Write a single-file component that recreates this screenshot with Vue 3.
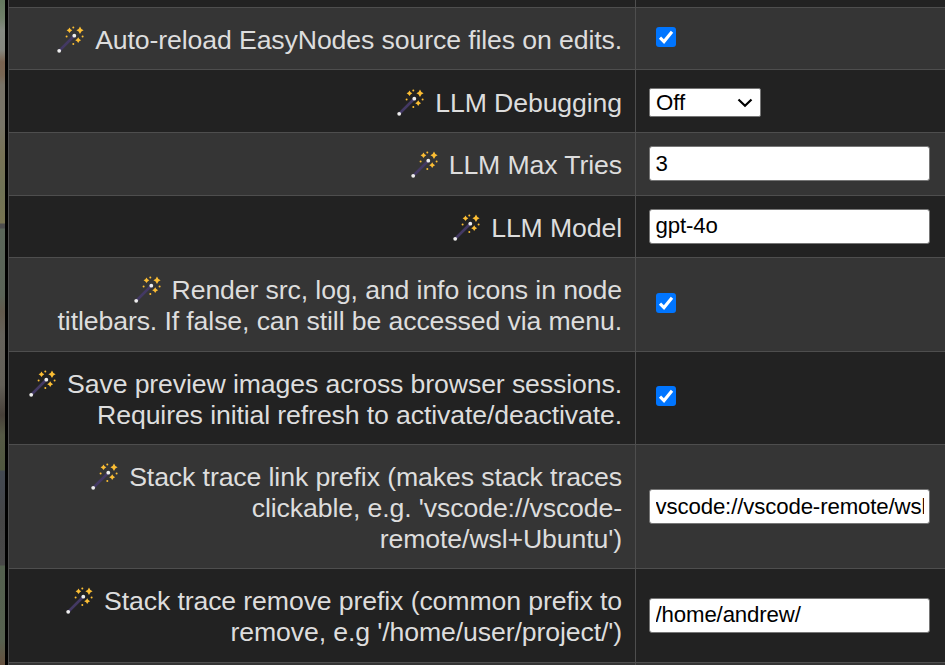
<script setup>
const rows = [
  { h: 62, type: 'check', drop: true, lines: ['Auto-reload EasyNodes source files on edits.'] },
  { h: 63, type: 'select', drop: true, value: 'Off', lines: ['LLM Debugging'] },
  { h: 63, type: 'text', lift: true, low: true, value: '3', lines: ['LLM Max Tries'] },
  { h: 62, type: 'text', drop: true, value: 'gpt-4o', lines: ['LLM Model'] },
  { h: 94, type: 'check', lines: ['Render src, log, and info icons in node', 'titlebars. If false, can still be accessed via menu.'] },
  { h: 93, type: 'check', drop: true, lift: true, lines: ['Save preview images across browser sessions.', 'Requires initial refresh to activate/deactivate.'] },
  { h: 124, type: 'text', drop: true, low: true, value: 'vscode://vscode-remote/wsl+Ubuntu', lines: ['Stack trace link prefix (makes stack traces', "clickable, e.g. 'vscode://vscode-", "remote/wsl+Ubuntu')"] },
  { h: 94, type: 'text', value: '/home/andrew/', lines: ['Stack trace remove prefix (common prefix to', "remove, e.g '/home/user/project/')"] },
]
</script>

<template>
  <div class="page">
    <div class="backdrop"></div>
    <div class="table">
      <div class="row edge"><div class="label"></div><div class="field"></div></div>
      <div v-for="(row, i) in rows" :key="i" class="row" :class="{ odd: i % 2 === 0 }" :style="{ height: row.h + 'px' }">
        <div class="label" :class="{ drop: row.drop }">
          <div v-for="(line, j) in row.lines" :key="j" class="line">
            <svg v-if="j === 0" class="wand" viewBox="0 0 27 27" aria-hidden="true">
              <path d="M2 25 17 10" stroke="#433963" stroke-width="2.6" />
              <circle cx="2.2" cy="24.8" r="1.9" fill="#eee" />
              <circle cx="17.3" cy="9.7" r="1.9" fill="#eee" />
              <g fill="#fcbe34">
                <path d="M23 .5 24.4 2.9 26.6 4.2 24.4 5.6 23 8 21.6 5.6 19.4 4.2 21.6 2.9Z" />
                <path d="M12.5 1.5 13.6 3.2 15.3 4.3 13.6 5.4 12.5 7 11.4 5.4 9.6 4.3 11.4 3.2Z" />
                <path d="M21.2 11.3 22.3 13.1 24.1 14.2 22.3 15.3 21.2 17.1 20.1 15.3 18.2 14.2 20.1 13.1Z" />
                <circle cx="16.3" cy="1.5" r="1" /><circle cx="9.6" cy="10.4" r="1" />
                <circle cx="25.6" cy="10.4" r="1" /><circle cx="16.3" cy="18" r="1" />
              </g>
            </svg>
            <span>{{ line }}</span>
          </div>
        </div>
        <div class="field" :class="{ lift: row.lift }">
          <input v-if="row.type === 'text'" class="input" :class="{ low: row.low }" type="text" :value="row.value" />
          <div v-else-if="row.type === 'select'" class="select">
            <span>{{ row.value }}</span>
            <svg viewBox="0 0 16 10" aria-hidden="true"><path d="M1.5 1.5 8 7.8 14.5 1.5" /></svg>
          </div>
          <div v-else class="check" role="checkbox" aria-checked="true">
            <svg viewBox="0 0 20 20" aria-hidden="true"><path d="M4 10.6 8 14.6 16 4.8" /></svg>
          </div>
        </div>
      </div>
      <div class="row odd last"><div class="label"></div><div class="field"></div></div>
    </div>
  </div>
</template>

<style>
body { background: #000; overflow: hidden; }
</style>

<style scoped>
.page { display: flex; width: 945px; height: 665px; overflow: hidden; background: #000; font-family: "Liberation Sans", Arial, sans-serif; }
.backdrop {
  width: 5px; margin-right: 3px; flex: none;
  background: linear-gradient(#63785d 0, #708069 18px, #858a82 30px, #85877f 50px, #7a6350 62px, #796653 75px, #777267 85px, #777467 125px, #777255 155px, #6f7255 190px, #777350 223px, #4d4d4d 224px, #4d4d4d 228px, #5a6659 229px, #5a6357 295px, #635a4d 312px, #65625b 335px, #625f57 385px, #474039 415px, #555945 435px, #50583f 470px, #434951 471px, #43474e 490px, #454545 520px, #484848 565px, #53604e 566px, #56614f 640px, #66503e 665px);
}
.table { width: 937px; border-left: 1px solid #4e4e4e; box-sizing: border-box; }
.row { display: grid; grid-template-columns: 627px 1fr; box-sizing: border-box; background: #222; border-bottom: 1px solid #4e4e4e; }
.row.odd { background: #353535; }
.edge { height: 8px; }
.last { height: 20px; }
.label { display: flex; flex-direction: column; justify-content: center; padding: 2px 13px 0 0; border-right: 1px solid #4e4e4e; color: #ddd; font-size: 26.667px; line-height: 31px; letter-spacing: -0.115px; }
.label.drop { padding-top: 4px; }
.line { display: flex; justify-content: flex-end; white-space: pre; }
.wand { width: 27px; height: 27px; margin: 1.4px 11px 0 0; flex: none; }
.field { display: flex; align-items: center; padding-left: 13px; }
.field.lift { padding-bottom: 1px; }
.input { box-sizing: border-box; width: 281px; height: 35px; padding: 0 5px 2px 5.5px; border: 1px solid #767676; border-radius: 3px; outline: 0; background: #fff; color: #000; font: 22.222px "Liberation Sans", Arial, sans-serif; letter-spacing: -0.13px; }
.input.low { padding-bottom: 0; }
.select { display: flex; align-items: center; justify-content: space-between; box-sizing: border-box; width: 112px; height: 29px; margin-top: 3px; padding: 0 7px 0 6px; border: 1px solid #767676; border-radius: 2px; background: #fff; color: #000; font-size: 22.222px; line-height: 27px; }
.select svg { width: 16px; height: 10px; fill: none; stroke: #000; stroke-width: 2.2; }
.check { width: 20px; height: 20px; margin: 0 0 3px 7px; border-radius: 3px; background: #0075ff; }
.check svg { display: block; fill: none; stroke: #fff; stroke-width: 3.1; }
</style>
